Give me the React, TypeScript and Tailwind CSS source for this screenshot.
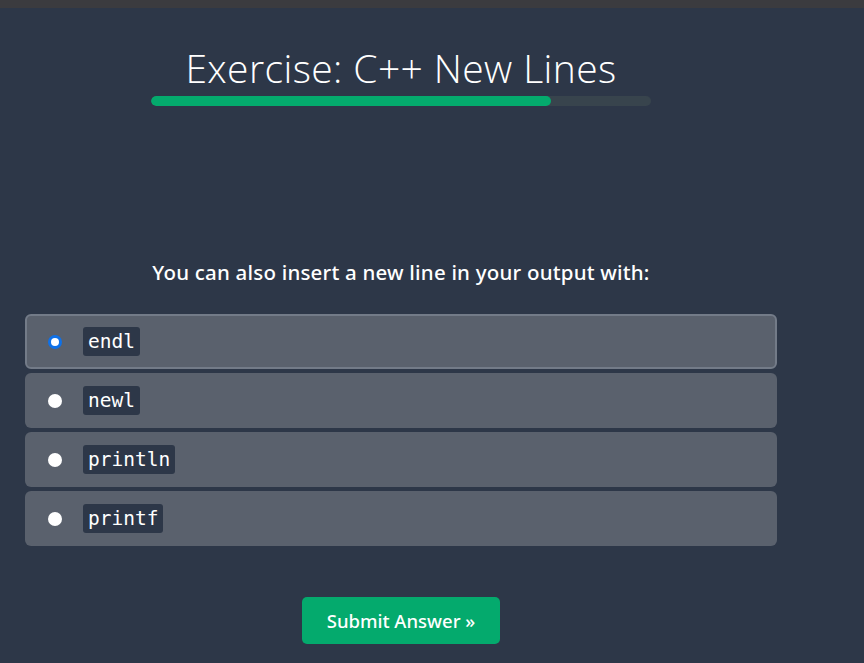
import React, { useState } from 'react';

const options = ['endl', 'newl', 'println', 'printf'];

const App: React.FC = () => {
    const [selected, setSelected] = useState(0);

    return (
        <div className="min-h-[663px] bg-[#2d3748] text-white" style={{ fontFamily: '"Noto Sans", "Open Sans", sans-serif' }}>
            <div className="h-[8px] bg-[#3b3b3f]" />
            <div className="w-[752px] ml-[25px] flex flex-col items-center">
                <h1 className="mt-[36px] text-[39px] leading-[48px] font-light tracking-[0.4px]" style={{ fontFamily: '"Open Sans", "Noto Sans", sans-serif' }}>
                    Exercise: C++ New Lines
                </h1>
                <div className="mt-[4px] w-[500px] h-[10px] rounded-full bg-[#38444d] overflow-hidden">
                    <div className="h-full w-[80%] rounded-full bg-[#04aa6d]" />
                </div>

                <p className="mt-[152px] text-[20.5px] leading-[28px] font-medium tracking-[0.2px]">
                    You can also insert a new line in your output with:
                </p>

                <div className="mt-[28px] w-full flex flex-col gap-[4px]">
                    {options.map((opt, i) => (
                        <label
                            key={opt}
                            className={`flex items-center h-[55px] rounded-[6px] bg-[#5a616d] pl-[21px] cursor-pointer border-2 ${selected === i ? 'border-[#737b88]' : 'border-transparent'}`}
                            onClick={() => setSelected(i)}
                        >
                            <span className={`w-[14px] h-[14px] rounded-full flex items-center justify-center ${selected === i ? 'bg-[#0f71e8]' : 'bg-white'}`}>
                                {selected === i && <span className="w-[8px] h-[8px] rounded-full bg-white" />}
                            </span>
                            <code
                                className="ml-[21px] px-[5px] h-[29px] flex items-center rounded-[3px] bg-[#2d3748] text-[19.5px]"
                                style={{ fontFamily: '"DejaVu Sans Mono", "Liberation Mono", monospace' }}
                            >
                                {opt}
                            </code>
                        </label>
                    ))}
                </div>

                <button className="mt-[51px] w-[198px] h-[47px] rounded-[5px] bg-[#04aa6d] text-[18.5px] font-medium text-white">
                    Submit Answer »
                </button>
            </div>
        </div>
    );
};

export default App;
